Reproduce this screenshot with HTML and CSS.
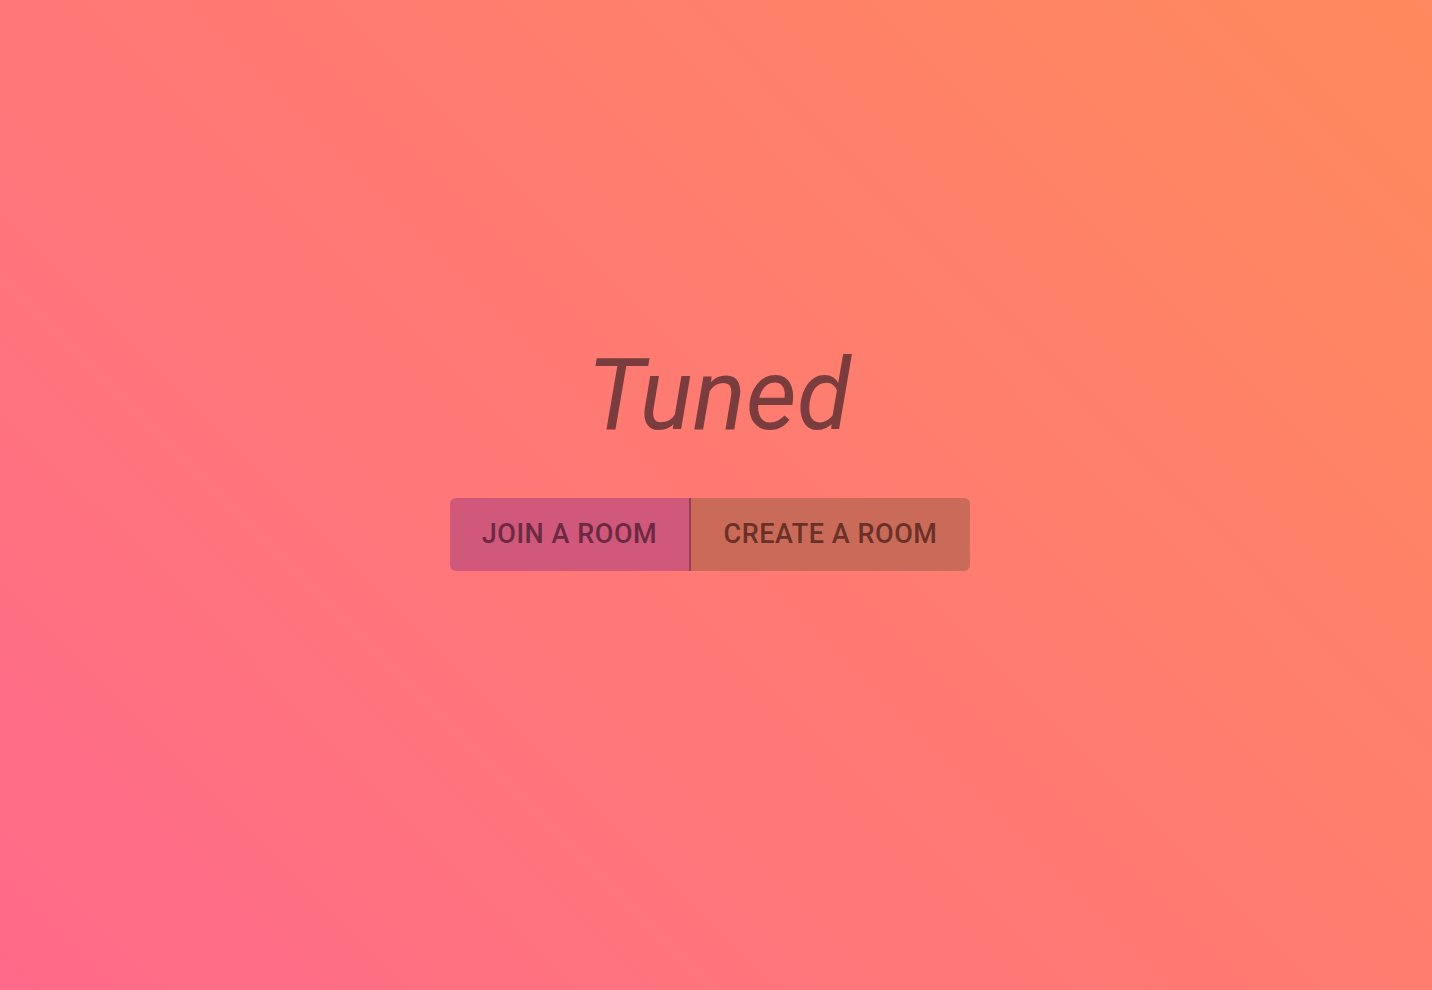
FILE: index.html
```html
<!DOCTYPE html>
<html>
<head>
<meta charset="utf-8">
<link rel="stylesheet" href="styles.css">
<title>Tuned</title>
</head>
<body>
<main class="page">
  <h1 class="title">Tuned</h1>
  <div class="group">
    <button class="btn btn-join">Join a Room</button>
    <button class="btn btn-create">Create a Room</button>
  </div>
</main>
</body>
</html>
```
FILE: styles.css
```css
html, body {
  margin: 0;
  height: 100%;
}
body {
  background: linear-gradient(45deg, #ff6a8a 0%, #ff8a5c 100%);
  font-family: Roboto, "Liberation Sans", sans-serif;
}
.page {
  height: 100%;
  box-sizing: border-box;
  padding-right: 12px;
  display: flex;
  flex-direction: column;
  align-items: center;
  justify-content: center;
}
.title {
  margin: 0 0 43px 0;
  font-size: 99px;
  font-weight: 400;
  font-style: italic;
  color: #7a3d3d;
  line-height: 1.2;
  padding-left: 18px;
}
.group {
  display: flex;
  border-radius: 6px;
  overflow: hidden;
  margin-bottom: 83px;
}
.btn {
  border: 0;
  font-family: Roboto, "Liberation Sans", sans-serif;
  font-weight: 500;
  font-size: 27px;
  text-transform: uppercase;
  letter-spacing: 0.02em;
  height: 73px;
  padding: 0;
  cursor: pointer;
}
.btn-join {
  background: #d0587a;
  color: #6b2a42;
  border-right: 2px solid #9a3d5a;
  width: 241px;
}
.btn-create {
  background: #ca6b5a;
  color: #6a3129;
  width: 279px;
}
```
